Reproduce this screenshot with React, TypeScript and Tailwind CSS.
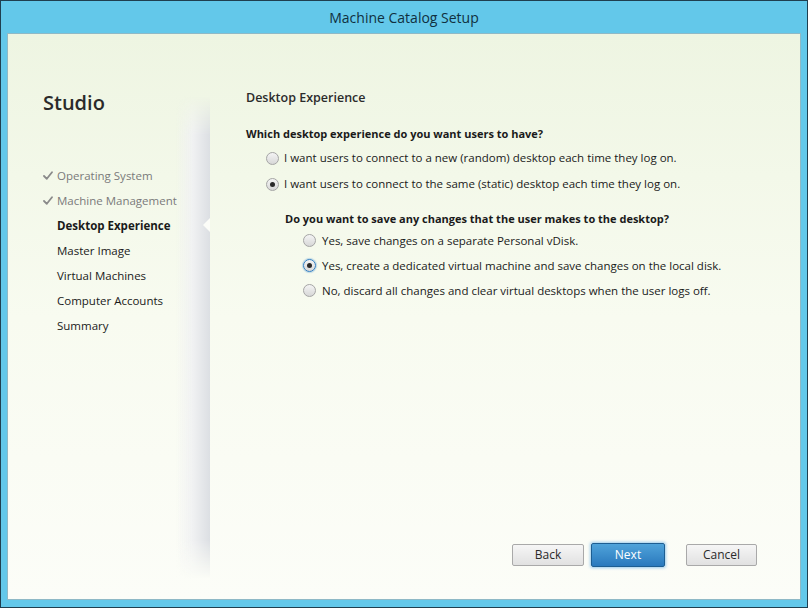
import React from "react";

const font = { fontFamily: '"Open Sans", "Noto Sans", sans-serif' };

function Radio({ checked, focused }: { checked?: boolean; focused?: boolean }) {
  return (
    <span
      className={
        "relative inline-flex items-center justify-center w-[13px] h-[13px] rounded-full border shrink-0 bg-gradient-to-b from-[#f4f4f4] to-[#d8d8d8] " +
        (focused ? "border-[#2f7dc2] shadow-[0_0_1px_1px_rgba(80,150,210,0.35)]" : "border-[#a5a5a5]")
      }
    >
      {checked && <span className="w-[5px] h-[5px] rounded-full bg-[#2a2a2a]" />}
    </span>
  );
}

function Check() {
  return (
    <svg width="10" height="9" viewBox="0 0 10 9" className="shrink-0">
      <path d="M1 5 L3.8 7.8 L9 1.2" fill="none" stroke="#8a8a8a" strokeWidth="1.8" strokeLinecap="round" strokeLinejoin="round" />
    </svg>
  );
}

export default function App() {
  const nav = [
    { label: "Operating System", done: true },
    { label: "Machine Management", done: true },
    { label: "Desktop Experience", current: true },
    { label: "Master Image" },
    { label: "Virtual Machines" },
    { label: "Computer Accounts" },
    { label: "Summary" },
  ];
  return (
    <div className="w-[808px] h-[608px] bg-[#1f3f50] p-[1px] overflow-hidden" style={font}>
      <div className="w-full h-full bg-[#63c8ea] flex flex-col">
        <div className="h-[32px] flex items-center justify-center text-[14px] text-[#10303f] pt-[1px]">
          Machine Catalog Setup
        </div>
        <div className="flex-1 mx-[6px] mb-[7px] border border-[#8fb9c6] bg-gradient-to-b from-[#eef5e2] via-[#f8fbf0] to-[#fcfdf8] flex">
          {/* Sidebar */}
          <div className="relative w-[202px] shrink-0 pl-[35px] pt-[55px]">
            <div className="text-[20px] font-semibold text-[#2a2a2a] leading-[28px]">Studio</div>
            <div className="mt-[46px] flex flex-col">
              {nav.map((n) => (
                <div key={n.label} className="h-[25px] flex items-center text-[11.5px]">
                  <span className="w-[14px] flex items-center">{n.done && <Check />}</span>
                  <span
                    className={
                      n.done
                        ? "text-[#7a7a7a]"
                        : n.current
                        ? "font-bold text-[#1a1a1a]"
                        : "text-[#1a1a1a]"
                    }
                  >
                    {n.label}
                  </span>
                </div>
              ))}
            </div>
            {/* shadow strip */}
            <div className="absolute right-0 top-[62px] bottom-[20px] w-[34px] bg-gradient-to-r from-transparent via-[#f0f1f2] to-[#dcdfe3] [mask-image:linear-gradient(to_bottom,transparent,black_8%,black_92%,transparent)]" />
            {/* notch */}
            <div className="absolute right-0 top-[184px] w-0 h-0 border-y-[7px] border-y-transparent border-r-[7px] border-r-[#fcfdf8]" />
          </div>
          {/* Main */}
          <div className="flex-1 flex flex-col pl-[36px] pt-[55px] pb-[32px] text-[#1a1a1a]">
            <div className="text-[12.5px] font-semibold text-[#2b2b2b] leading-[18px]">Desktop Experience</div>
            <div className="mt-[18px] text-[11px] font-bold leading-[18px]">Which desktop experience do you want users to have?</div>
            <div className="mt-[2px] pl-[20px] flex flex-col text-[11.5px]">
              <div className="h-[26px] flex items-center gap-[5px]">
                <Radio />
                <span>I want users to connect to a new (random) desktop each time they log on.</span>
              </div>
              <div className="h-[26px] flex items-center gap-[5px]">
                <Radio checked />
                <span>I want users to connect to the same (static) desktop each time they log on.</span>
              </div>
            </div>
            <div className="mt-[13px] pl-[39px] text-[11px] font-bold leading-[18px]">
              Do you want to save any changes that the user makes to the desktop?
            </div>
            <div className="pl-[57px] flex flex-col text-[11.5px] mt-[0px]">
              <div className="h-[25px] flex items-center gap-[6px]">
                <Radio />
                <span>Yes, save changes on a separate Personal vDisk.</span>
              </div>
              <div className="h-[25px] flex items-center gap-[6px]">
                <Radio checked focused />
                <span>Yes, create a dedicated virtual machine and save changes on the local disk.</span>
              </div>
              <div className="h-[25px] flex items-center gap-[6px]">
                <Radio />
                <span>No, discard all changes and clear virtual desktops when the user logs off.</span>
              </div>
            </div>
            <div className="flex-1" />
            <div className="flex items-center pl-[266px] text-[12px]">
              <button className="w-[72px] h-[22px] rounded-[2px] border border-[#a9a9a9] bg-gradient-to-b from-[#f6f6f6] to-[#e1e1e1] text-[#2a2a2a]">
                Back
              </button>
              <button className="ml-[7px] w-[74px] h-[24px] rounded-[2px] border border-[#1d5e92] bg-gradient-to-b from-[#4fa3da] to-[#2a79bd] text-white shadow-[0_0_3px_1px_rgba(90,170,230,0.6)]">
                Next
              </button>
              <button className="ml-[21px] w-[71px] h-[22px] rounded-[2px] border border-[#a9a9a9] bg-gradient-to-b from-[#f6f6f6] to-[#e1e1e1] text-[#2a2a2a]">
                Cancel
              </button>
            </div>
          </div>
        </div>
      </div>
    </div>
  );
}
